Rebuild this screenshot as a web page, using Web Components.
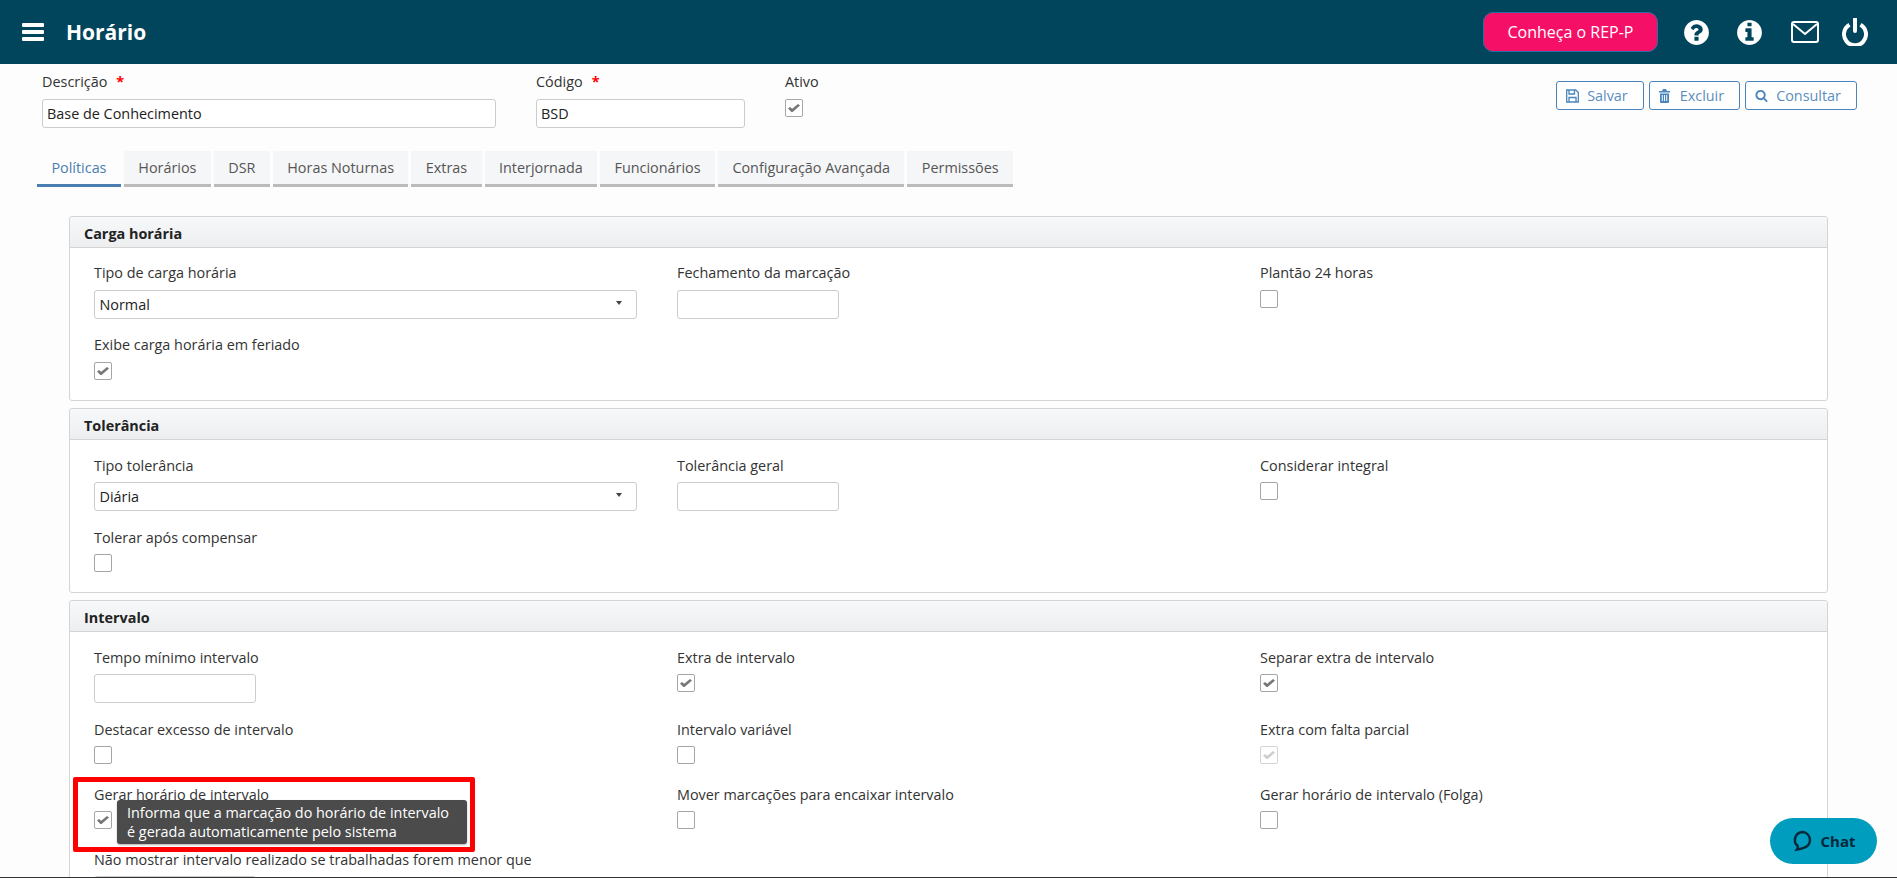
<!DOCTYPE html>
<html lang="pt">
<head>
<meta charset="utf-8">
<title>Horário</title>
<style>
	html, body { margin: 0; padding: 0; height: 100%; overflow: hidden; }
	body { font-family: "Open Sans", "Liberation Sans", sans-serif; font-size: 14.4px; color: #333; background: #fdfdfd; }
	horario-page { height: 878px; }
</style>
</head>
<body>
<horario-page>
	<app-header slot="header" title="Horário"></app-header>

	<top-form slot="top">
		<form-field label="Descrição" required style="width:454px"><text-box value="Base de Conhecimento"></text-box></form-field>
		<form-field label="Código" required style="width:209px"><text-box value="BSD"></text-box></form-field>
		<form-field label="Ativo"><check-box checked></check-box></form-field>
		<action-buttons slot="actions"></action-buttons>
	</top-form>

	<tab-bar slot="tabs" active="Políticas" tabs="Políticas,Horários,DSR,Horas Noturnas,Extras,Interjornada,Funcionários,Configuração Avançada,Permissões"></tab-bar>

	<form-panel heading="Carga horária" style="--label-lh:16px">
		<form-field label="Tipo de carga horária"><select-box value="Normal"></select-box></form-field>
		<form-field label="Fechamento da marcação"><text-box style="width:162px"></text-box></form-field>
		<form-field label="Plantão 24 horas"><check-box></check-box></form-field>
		<form-field label="Exibe carga horária em feriado"><check-box checked></check-box></form-field>
	</form-panel>

	<form-panel heading="Tolerância">
		<form-field label="Tipo tolerância"><select-box value="Diária"></select-box></form-field>
		<form-field label="Tolerância geral"><text-box style="width:162px"></text-box></form-field>
		<form-field label="Considerar integral"><check-box></check-box></form-field>
		<form-field label="Tolerar após compensar"><check-box></check-box></form-field>
	</form-panel>

	<form-panel heading="Intervalo">
		<form-field label="Tempo mínimo intervalo"><text-box style="width:162px"></text-box></form-field>
		<form-field label="Extra de intervalo"><check-box checked></check-box></form-field>
		<form-field label="Separar extra de intervalo"><check-box checked></check-box></form-field>
		<form-field label="Destacar excesso de intervalo"><check-box></check-box></form-field>
		<form-field label="Intervalo variável"><check-box></check-box></form-field>
		<form-field label="Extra com falta parcial"><check-box checked disabled></check-box></form-field>
		<tip-highlight>
			<form-field label="Gerar horário de intervalo"><check-box checked></check-box></form-field>
			<span slot="tip">Informa que a marcação do horário de intervalo<br>é gerada automaticamente pelo sistema</span>
		</tip-highlight>
		<form-field label="Mover marcações para encaixar intervalo"><check-box></check-box></form-field>
		<form-field label="Gerar horário de intervalo (Folga)"><check-box></check-box></form-field>
		<form-field label="Não mostrar intervalo realizado se trabalhadas forem menor que"><text-box style="width:162px"></text-box></form-field>
	</form-panel>

	<chat-button slot="chat"></chat-button>
</horario-page>

<script>
const ICONS = {
	question: 'M1024 1376v-192q0-14-9-23t-23-9h-192q-14 0-23 9t-9 23v192q0 14 9 23t23 9h192q14 0 23-9t9-23zm256-672q0-88-55.5-163t-138.5-116-170-41q-243 0-371 213-15 24 8 42l132 100q7 6 19 6 16 0 25-12 53-68 86-92 34-24 86-24 48 0 85.5 26t37.5 59q0 38-20 61t-68 45q-63 28-115.5 86.5t-52.5 125.5v36q0 14 9 23t23 9h192q14 0 23-9t9-23q0-19 21.5-49.5t54.5-49.5q32-18 49-28.5t46-35 44.5-48 28-60.5 12.5-81zm384 192q0 209-103 385.5t-279.5 279.5-385.5 103-385.5-103-279.5-279.5-103-385.5 103-385.5 279.5-279.5 385.5-103 385.5 103 279.5 279.5 103 385.5z',
	info: 'M1152 1376v-160q0-14-9-23t-23-9h-96v-512q0-14-9-23t-23-9h-320q-14 0-23 9t-9 23v160q0 14 9 23t23 9h96v320h-96q-14 0-23 9t-9 23v160q0 14 9 23t23 9h448q14 0 23-9t9-23zm-128-896v-160q0-14-9-23t-23-9h-192q-14 0-23 9t-9 23v160q0 14 9 23t23 9h192q14 0 23-9t9-23zm640 416q0 209-103 385.5t-279.5 279.5-385.5 103-385.5-103-279.5-279.5-103-385.5 103-385.5 279.5-279.5 385.5-103 385.5 103 279.5 279.5 103 385.5z',
	search: 'M1216 832q0-185-131.5-316.5t-316.5-131.5-316.5 131.5-131.5 316.5 131.5 316.5 316.5 131.5 316.5-131.5 131.5-316.5zm512 832q0 52-38 90t-90 38q-54 0-90-38l-343-342q-179 124-399 124-143 0-273.5-55.5t-225-150-150-225-55.5-273.5 55.5-273.5 150-225 225-150 273.5-55.5 273.5 55.5 225 150 150 225 55.5 273.5q0 220-124 399l343 343q37 37 37 90z'
};

function faIcon(name, size) {
	return `<svg width="${size}" height="${size}" viewBox="0 0 1792 1792" fill="currentColor"><path d="${ICONS[name]}"/></svg>`;
}

class HorarioPage extends HTMLElement {
	constructor() {
		super();
		this.attachShadow({mode: 'open'}).innerHTML = `
			<style>
				:host { display: flex; flex-direction: column; overflow: hidden; border-bottom: 1px solid #333; box-sizing: border-box; }
				.pane { display: flex; flex-direction: column; gap: 7px; margin: 29px 69px 0 69px; }
				.tabs { display: block; margin: 23px 0 0 37px; }
			</style>
			<slot name="header"></slot>
			<slot name="top"></slot>
			<div class="tabs"><slot name="tabs"></slot></div>
			<div class="pane"><slot></slot></div>
			<slot name="chat"></slot>
		`;
	}
}

class AppHeader extends HTMLElement {
	constructor() {
		super();
		this.attachShadow({mode: 'open'}).innerHTML = `
			<style>
				:host { display: flex; align-items: center; flex: none; height: 64px; background: #00455c; color: #fff; }
				.burger { display: flex; flex-direction: column; gap: 3px; margin-left: 22px; width: 22px; }
				.burger i { display: block; height: 4px; background: #fff; border-radius: 1px; }
				h1 { margin: 0 0 0 22px; font-size: 21px; font-weight: 700; line-height: 28px; flex: 1; }
				.rep { box-sizing: border-box; width: 175px; height: 40px; border: 1px solid #2e6da4; border-radius: 10px; background: #f50f66; color: #fff; font: 16px "Open Sans", sans-serif; display: flex; align-items: center; justify-content: center; }
				.icons { display: flex; align-items: center; margin: 0 29px 0 24px; }
				.icons svg { display: block; }
				.info { margin-left: 24px; }
				.mail { margin-left: 27px; }
				.power { margin-left: 23px; }
			</style>
			<div class="burger"><i></i><i></i><i></i></div>
			<h1>${this.getAttribute('title')}</h1>
			<div class="rep">Conheça o REP-P</div>
			<div class="icons">
				${faIcon('question', 29)}
				<span class="info">${faIcon('info', 29)}</span>
				<span class="mail"><svg width="28" height="22" viewBox="0 0 28 22" fill="none" stroke="#fff" stroke-width="2"><rect x="1" y="1" width="26" height="20" rx="2"/><path d="M2 3l12 10L26 3"/></svg></span>
				<span class="power"><svg width="26" height="28" viewBox="0 0 26 28" fill="none" stroke="#fff" stroke-width="4"><path d="M7.500 6.800a11 11 0 1 0 11 0"/><path d="M13 1v12" stroke-linecap="round"/></svg></span>
			</div>
		`;
	}
}

class TopForm extends HTMLElement {
	constructor() {
		super();
		this.attachShadow({mode: 'open'}).innerHTML = `
			<style>
				:host { display: flex; gap: 40px; flex: none; padding: 10px 40px 0 42px; --label-lh: 16px; }
				.actions { margin-left: auto; padding-top: 7px; }
			</style>
			<slot></slot>
			<div class="actions"><slot name="actions"></slot></div>
		`;
	}
}

class ActionButtons extends HTMLElement {
	constructor() {
		super();
		const trash = `<svg width="13" height="14" viewBox="0 0 13 14" fill="currentColor"><path d="M4 0h3l1 2h3v1.500H0V2h3zM1 4.500h9V13a1 1 0 0 1-1 1H2a1 1 0 0 1-1-1zm1.800 1.500v6h1v-6zm2.200 0v6h1v-6zm2.200 0v6h1v-6z" fill-rule="evenodd"/></svg>`;
		const save = `<svg width="13" height="14" viewBox="0 0 13 14" fill="none" stroke="currentColor" stroke-width="1.300"><path d="M.7 1h9l2.600 2.500V13H.7z"/><path d="M3 1v4h5.500V1M3 13V8.500h7V13"/></svg>`;
		this.attachShadow({mode: 'open'}).innerHTML = `
			<style>
				:host { display: flex; gap: 5px; }
				.btn { box-sizing: border-box; height: 29px; display: flex; align-items: center; gap: 8px; padding: 0 15px 0 9px; border: 1px solid #4a86bd; border-radius: 3px; color: #5b8dbd; background: #fff; font-size: 14.4px; }
				.btn svg { display: block; color: #4a86bd; }
			</style>
			<div class="btn">${save}Salvar</div>
			<div class="btn">${trash}Excluir</div>
			<div class="btn">${faIcon('search', 13)}Consultar</div>
		`;
	}
}

class TabBar extends HTMLElement {
	constructor() {
		super();
		const active = this.getAttribute('active');
		const tabs = this.getAttribute('tabs').split(',').map(name =>
			`<div class="tab ${name === active ? 'on' : ''}">${name}</div>`).join('');
		this.attachShadow({mode: 'open'}).innerHTML = `
			<style>
				:host { display: flex; gap: 3px; }
				.tab { box-sizing: border-box; height: 36px; padding: 0 14.400px; line-height: 33px; background: #f5f6f8; border-bottom: 3px solid #bbb; color: #555; font-size: 14.4px; white-space: nowrap; }
				.tab.on { background: transparent; color: #4a7eb0; border-bottom-color: #4a7eb0; }
			</style>
			${tabs}
		`;
	}
}

class FormPanel extends HTMLElement {
	constructor() {
		super();
		this.attachShadow({mode: 'open'}).innerHTML = `
			<style>
				:host { display: block; flex: none; background: #fff; border: 1px solid #d4d4d4; border-radius: 3px; }
				.head { box-sizing: border-box; height: 31px; padding: 0 14px; line-height: 33px; font-size: 14.4px; font-weight: 700; color: #222; background: linear-gradient(#f7f8f9, #eceef0); border-bottom: 1px solid #d4d4d4; border-radius: 3px 3px 0 0; }
				.body { display: grid; grid-template-columns: repeat(3, 583px); row-gap: 18px; padding: 17px 0 16px 24px; }
			</style>
			<div class="head">${this.getAttribute('heading')}</div>
			<div class="body"><slot></slot></div>
		`;
	}
}

class FormField extends HTMLElement {
	constructor() {
		super();
		const star = this.hasAttribute('required') ? '<span class="req">*</span>' : '';
		this.attachShadow({mode: 'open'}).innerHTML = `
			<style>
				:host { display: block; }
				.label { height: 25px; line-height: var(--label-lh, 17px); font-size: 14.4px; color: #333; white-space: nowrap; }
				.req { color: #f00; font-weight: 700; margin-left: 9px; }
			</style>
			<div class="label">${this.getAttribute('label')}${star}</div>
			<slot></slot>
		`;
	}
}

class TextBox extends HTMLElement {
	constructor() {
		super();
		this.attachShadow({mode: 'open'}).innerHTML = `
			<style>
				:host { display: block; box-sizing: border-box; height: 29px; padding: 0 4px; line-height: 27px; background: #fff; border: 1px solid #ccc; border-radius: 3px; font-size: 14.4px; color: #222; }
			</style>
			${this.getAttribute('value') || ''}
		`;
	}
}

class SelectBox extends HTMLElement {
	constructor() {
		super();
		this.attachShadow({mode: 'open'}).innerHTML = `
			<style>
				:host { display: flex; justify-content: space-between; box-sizing: border-box; width: 543px; height: 29px; padding: 0 14px 0 4.500px; line-height: 27px; background: #fff; border: 1px solid #ccc; border-radius: 3px; font-size: 14.4px; color: #222; }
				.arrow { width: 0; height: 0; margin-top: 10px; border: 3.500px solid transparent; border-top: 4px solid #444; border-bottom: 0; }
			</style>
			<span>${this.getAttribute('value')}</span>
			<span class="arrow"></span>
		`;
	}
}

class CheckBox extends HTMLElement {
	constructor() {
		super();
		const off = this.hasAttribute('disabled');
		const mark = this.hasAttribute('checked')
			? '<svg width="12" height="8" viewBox="0 0 12 8" fill="currentColor"><path d="M0 4.500 2 3l2.200 1.800L10 0l2 1.500L4.600 8H3.400z"/></svg>'
			: '';
		this.attachShadow({mode: 'open'}).innerHTML = `
			<style>
				:host { display: block; height: 22px; }
				.box { box-sizing: border-box; width: 18px; height: 18px; display: flex; align-items: center; justify-content: center; background: #fff; border: 1px solid ${off ? '#d4d4d4' : '#a6a6a6'}; border-radius: 2px; color: ${off ? '#cfcfcf' : '#777'}; }
				svg { display: block; }
			</style>
			<div class="box">${mark}</div>
		`;
	}
}

class TipHighlight extends HTMLElement {
	constructor() {
		super();
		this.attachShadow({mode: 'open'}).innerHTML = `
			<style>
				:host { display: block; position: relative; }
				.mark { position: absolute; left: -21px; top: -9px; width: 402px; height: 75px; box-sizing: border-box; border: 5px solid #f00; border-radius: 2px; pointer-events: none; }
				.tip { position: absolute; left: 23px; top: 14px; width: 350px; height: 44px; box-sizing: border-box; padding: 3px 10px; background: #4b4b4b; color: #fff; font-size: 14.4px; line-height: 19px; border-radius: 3px; box-shadow: 0 1px 2px rgba(0,0,0,.3); white-space: nowrap; }
			</style>
			<slot></slot>
			<div class="mark"></div>
			<div class="tip"><slot name="tip"></slot></div>
		`;
	}
}

class ChatButton extends HTMLElement {
	constructor() {
		super();
		this.attachShadow({mode: 'open'}).innerHTML = `
			<style>
				:host { position: fixed; left: 1770px; top: 818px; width: 107px; height: 46px; display: flex; align-items: center; justify-content: center; gap: 9px; background: #009dbf; border-radius: 23px; color: #06283a; font-size: 15px; font-weight: 700; }
				svg { display: block; }
			</style>
			<svg width="20" height="22" viewBox="0 0 20 22" fill="none" stroke="#06283a" stroke-width="2.500"><path d="M10 2a8 8 0 0 1 3 15.400c-2 .8-5 1.600-8 2.100 1-1.500 1-2.500.7-3.500A8 8 0 0 1 10 2z"/></svg>
			Chat
		`;
	}
}

customElements.define('horario-page', HorarioPage);
customElements.define('app-header', AppHeader);
customElements.define('top-form', TopForm);
customElements.define('action-buttons', ActionButtons);
customElements.define('tab-bar', TabBar);
customElements.define('form-panel', FormPanel);
customElements.define('form-field', FormField);
customElements.define('text-box', TextBox);
customElements.define('select-box', SelectBox);
customElements.define('check-box', CheckBox);
customElements.define('tip-highlight', TipHighlight);
customElements.define('chat-button', ChatButton);
</script>
</body>
</html>
